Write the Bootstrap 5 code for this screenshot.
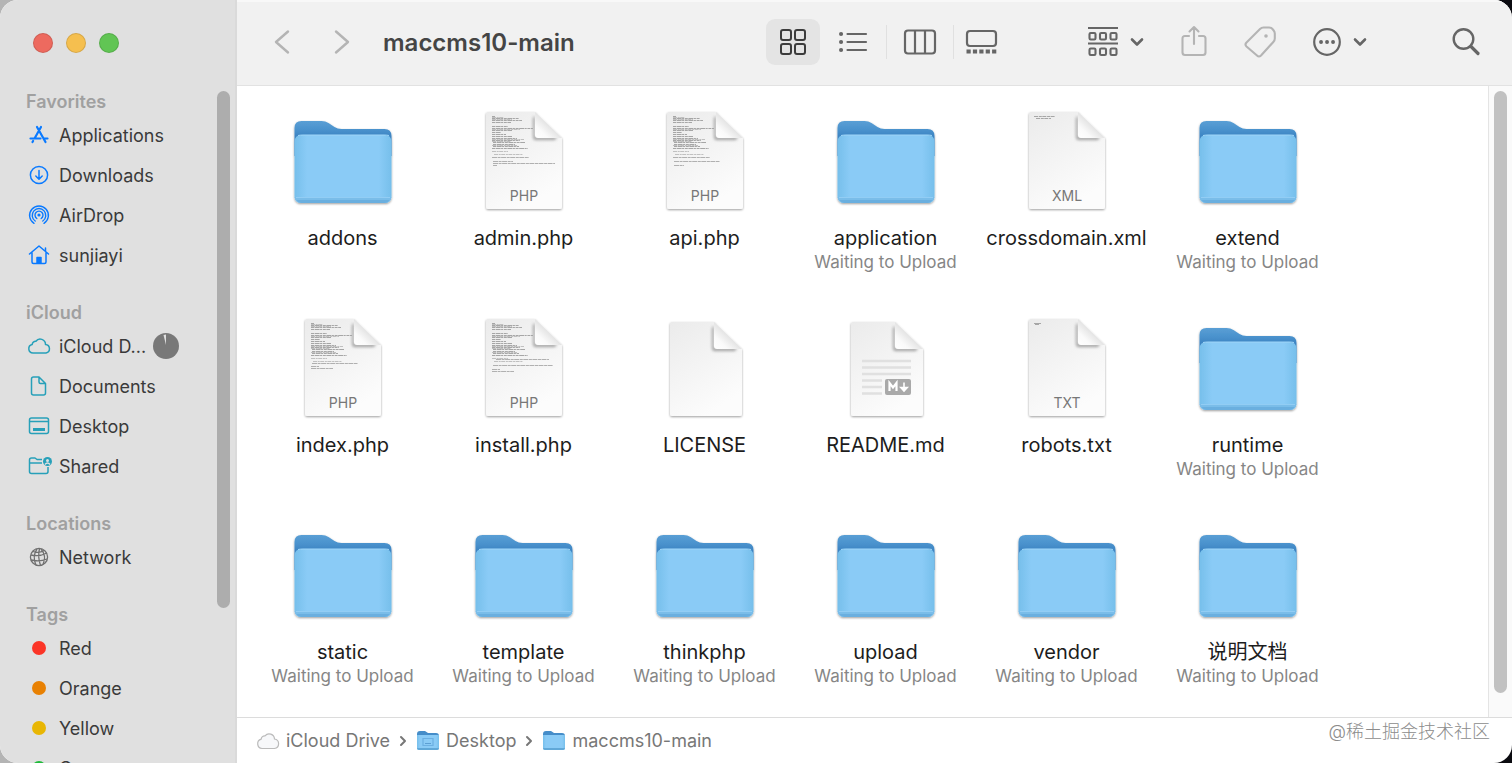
<!DOCTYPE html>
<html lang="en">
<head>
<meta charset="utf-8">
<meta name="viewport" content="width=device-width, initial-scale=1">
<title>maccms10-main</title>
<link rel="stylesheet" href="https://cdn.jsdelivr.net/npm/bootstrap@5.3.0/dist/css/bootstrap.min.css">
<style>
body { font-family: Inter, "Noto Sans CJK SC", sans-serif; background: linear-gradient(90deg, #b4b4b4 50%, #0b0b10 50%); }
.finder { border-radius: 18px; background: #fff; }
.side { width: 237px; background: #e0e0e0; border-right: 2px solid #dadada; }
.lights { height: 86px; padding-left: 33px; gap: 13px; }
.light { width: 20px; height: 20px; border-radius: 50%; border: 1px solid rgba(0,0,0,.12); padding: 0; }
.side-nav { padding: 3px 0 0 26px; }
.side-nav h2 { font-size: 18px; line-height: 26px; font-weight: 600; color: #a0a0a0; margin: 0; }
.side-nav section { margin-bottom: 25px; }
.side-nav a { height: 40px; font-size: 18px; color: #3a3a3a; gap: 7px; white-space: nowrap; }
.side-nav svg { width: 26px; height: 26px; flex: none; }
.dot { width: 14px; height: 14px; border-radius: 50%; margin: 0 6px; }
.track { width: 18px; padding-top: 5px; }
.thumb { width: 13px; border-radius: 7px; background: #adadad; height: 77%; }
.bar { height: 86px; background: #f1f1f1; border-bottom: 1px solid #e2e2e2; border-top: 2px solid #f8f8f8; padding: 0 19px 3px 18px; }
.bar h1 { font-size: 24px; font-weight: 600; color: #454545; margin: 2px auto 0 14px; }
.tool { width: 54px; height: 46px; padding: 0; border: 0; border-radius: 9px; color: #666; display: flex; align-items: center; justify-content: center; }
.tool.active { background: #e4e4e4; color: #3c3c3c; }
.tool.faint { color: #b4b4b4; }
.tool.wide { width: 72px; gap: 11px; }
.views { gap: 6px; margin-right: 71px; }
.rule { width: 1px; height: 34px; background: #e0e0e0; }
.flush { margin-left: -6px; }
.history { gap: 6px; }
.actions { gap: 16px; }
.pair { gap: 12px; }
.search { margin-left: 64px; }
.files { display: grid; grid-template-columns: repeat(auto-fill, 181px); grid-auto-rows: 207px; padding: 20px 0 0 15px; }
.files a { color: #1d1d1d; font-size: 20px; line-height: 28px; }
.files svg { width: 110px; height: 110px; display: block; margin: 0 auto 8px; }
.files span { display: block; white-space: nowrap; }
.files .wait { font-size: 17px; line-height: 21px; color: #868686; }
.main-track { width: 24px; flex: none; padding: 5px 0 24px 5px; background: #fafafa; border-left: 1px solid #e4e4e4; }
.main-track .thumb { background: #c1c1c1; height: 100%; }
.trail { height: 46px; border-top: 1px solid #dcdcdc; padding: 0 22px 0 19px; font-size: 18px; }
.trail nav { gap: 9px; }
.trail a { color: #777; gap: 6px; }
.trail svg { flex: none; }
.credit { color: #8c8c8c; font-weight: 300; margin-bottom: 18px; }
</style>
</head>
<body class="vh-100 overflow-hidden">
<svg width="0" height="0" class="position-absolute" aria-hidden="true">
  <defs>
    <linearGradient id="gBack" x1="0" y1="0" x2="0" y2="1"><stop offset="0" stop-color="#5a9fd5"/><stop offset=".25" stop-color="#4a92cd"/><stop offset=".55" stop-color="#357cbd"/><stop offset="1" stop-color="#357cbd"/></linearGradient>
    <linearGradient id="gFront" x1="0" y1="0" x2="1" y2="0"><stop offset="0" stop-color="#76bfeb"/><stop offset=".13" stop-color="#8acbf6"/><stop offset=".87" stop-color="#8acbf6"/><stop offset="1" stop-color="#76bfeb"/></linearGradient>
    <linearGradient id="gPaper" x1="0" y1="0" x2=".5" y2="1"><stop offset="0" stop-color="#ebebeb"/><stop offset="1" stop-color="#fcfcfc"/></linearGradient>
    <linearGradient id="gFold" x1="0" y1="1" x2=".5" y2=".5"><stop offset="0" stop-color="#fff"/><stop offset=".5" stop-color="#fafafa"/><stop offset="1" stop-color="#e4e4e4"/></linearGradient>
    <filter id="soft" x="-30%" y="-30%" width="160%" height="160%"><feGaussianBlur stdDeviation="1.500"/></filter>
    <filter id="drop" x="-10%" y="-10%" width="120%" height="120%"><feDropShadow dx="0" dy="1" stdDeviation="1" flood-opacity=".38"/></filter>
  </defs>
  <symbol id="folder" viewBox="0 0 110 110">
    <g filter="url(#drop)">
      <path d="M6.500 22q0-7 7-7h20q4 0 7 2l6 4q3 2 7 2h43q7 0 7 7v20h-97z" fill="url(#gBack)"/>
      <path d="M6.500 36q0-7 7-7h83q7 0 7 7v54q0 7-7 7h-83q-7 0-7-7z" fill="url(#gFront)"/>
      <path d="M6.500 91q1 6 7 6h83q6 0 7-6z" fill="#7abde9"/>
      <path d="M8.500 94q2 3 5 3h83q3 0 5-3z" fill="#6aafdf"/>
    </g>
    <path d="M10 29.500q2-.5 5-.5h81q3 0 5 .5" stroke="#a0d6f8" fill="none"/>
    <path d="M8 91.500h94" stroke="#92cdf4" stroke-width="1"/>
  </symbol>
  <symbol id="paper" viewBox="0 0 110 110">
    <path filter="url(#drop)" d="M17 8q0-2 2-2h47l27 26v69q0 2-2 2H19q-2 0-2-2z" fill="url(#gPaper)"/>
    <path d="M66 10v21h22l-2 3H67q-3 0-3-3V12z" fill="#555" opacity=".55" filter="url(#soft)"/>
    <path d="M66 6L93 32H69q-3 0-3-3z" fill="url(#gFold)"/>
  </symbol>
  <symbol id="blank" viewBox="0 0 110 110">
    <path filter="url(#drop)" d="M20 11q0-2 2-2h42l28 27v65q0 2-2 2H22q-2 0-2-2z" fill="url(#gPaper)"/>
    <path d="M64 13v22h23l-2 3H65q-3 0-3-3V15z" fill="#555" opacity=".55" filter="url(#soft)"/>
    <path d="M64 9L92 36H67q-3 0-3-3z" fill="url(#gFold)"/>
  </symbol>
  <symbol id="code" viewBox="0 0 110 110">
    <g stroke="#a6a6a6" stroke-width="1" fill="none">
      <path stroke-dasharray="3 .6 5 .5 2 .7" d="M23 10.500h3M23 12.500h27M23 14.500h30M23 16.500h19M23 20.500h16M23 22.500h41M23 24.500h20M23 26.500h9M23 28.500h14M23 30.500h20M23 32.500h25M23 34.500h28M24 36.500h32M24 38.500h22M24 40.500h26M23 42.500h36"/>
      <path stroke="#c0c0c0" stroke-dasharray="4 .7 2 .5" d="M23 11.500h12M23 13.500h20M23 23.500h28M23 33.500h32M23 35.500h19M23 39.500h25M23 45.500h16M25 48.500h29"/>
    </g>
  </symbol>
  <symbol id="mini" viewBox="0 0 24 22">
    <path d="M1 4q0-3 3-3h5l3 2h8q3 0 3 3v6H1z" fill="#458dc9"/><path d="M1 5h22v13q0 2-2 2H3q-2 0-2-2z" fill="url(#gFront)"/><path d="M1 18q0 2 2 2h18q2 0 2-2z" fill="#60a8d8"/>
  </symbol>
  <symbol id="down" viewBox="0 0 14 10"><path d="M2 2.500l5 5 5-5" fill="none" stroke="currentColor" stroke-width="2.600" stroke-linecap="round" stroke-linejoin="round"/></symbol>
  <symbol id="next" viewBox="0 0 8 12"><path d="M2 2l4 4-4 4" fill="none" stroke="#777" stroke-width="2" stroke-linecap="round" stroke-linejoin="round"/></symbol>
</svg>

<div class="finder d-flex h-100 overflow-hidden">
  <aside class="side d-flex flex-column flex-shrink-0 overflow-hidden">
    <div class="lights d-flex align-items-center flex-shrink-0">
      <button class="light" style="background:#ed6a5f" aria-label="Close"></button>
      <button class="light" style="background:#f5bf4f" aria-label="Minimize"></button>
      <button class="light" style="background:#61c554" aria-label="Zoom"></button>
    </div>
    <div class="d-flex flex-grow-1 overflow-hidden">
      <nav class="side-nav flex-grow-1" aria-label="Sidebar">
        <section>
          <h2>Favorites</h2>
          <a href="#" class="d-flex align-items-center text-decoration-none"><svg viewBox="0 0 26 26" fill="none" stroke="#0a7aff" stroke-width="2.200" stroke-linecap="round"><path d="M11 5l8.500 15M15 5L8.800 16M4.500 16.500h10M18.500 16.500h3M6.500 20l.6-1"/></svg><span>Applications</span></a>
          <a href="#" class="d-flex align-items-center text-decoration-none"><svg viewBox="0 0 26 26" fill="none" stroke="#0a7aff" stroke-width="1.500" stroke-linecap="round" stroke-linejoin="round"><circle cx="13" cy="13" r="8.600"/><path d="M13 8.500v8.500M9.800 14l3.200 3.200 3.200-3.200"/></svg><span>Downloads</span></a>
          <a href="#" class="d-flex align-items-center text-decoration-none"><svg viewBox="0 0 26 26" fill="none" stroke="#0a7aff" stroke-width="1.400" stroke-linecap="round"><circle cx="13" cy="13" r="1.600" fill="#0a7aff" stroke="none"/><path d="M10.800 16.500a4 4 0 1 1 4.400 0M9.200 19a6.800 6.800 0 1 1 7.600 0M8 21.300a9.400 9.400 0 1 1 10 0"/></svg><span>AirDrop</span></a>
          <a href="#" class="d-flex align-items-center text-decoration-none"><svg viewBox="0 0 26 26" fill="none" stroke="#0a7aff" stroke-width="1.500" stroke-linecap="round" stroke-linejoin="round"><path d="M3.500 12L13 4l9.500 8M6 10.500V20q0 1.500 1.500 1.500h11q1.500 0 1.500-1.500v-9.500M19.500 9V6"/><path d="M11 21v-5.500h4V21z" fill="#0a7aff"/></svg><span>sunjiayi</span></a>
        </section>
        <section>
          <h2>iCloud</h2>
          <a href="#" class="d-flex align-items-center text-decoration-none"><svg viewBox="0 0 26 26" fill="none" stroke="#27a0b9" stroke-width="1.500" stroke-linejoin="round"><path d="M7 20a4.300 4.300 0 0 1-.8-8.500 3.400 3.400 0 0 1 3.700-3.200A5.300 5.300 0 0 1 19.500 11.500 4.300 4.300 0 0 1 20 20z"/></svg><span>iCloud D...</span><svg viewBox="0 0 26 26"><circle cx="13" cy="13" r="13" fill="#787878"/><path d="M13 12L10.500 2l2.500-.4z" fill="#e0e0e0"/></svg></a>
          <a href="#" class="d-flex align-items-center text-decoration-none"><svg viewBox="0 0 26 26" fill="none" stroke="#27a0b9" stroke-width="1.500" stroke-linejoin="round"><path d="M7.500 4H13l6.500 6.500V20q0 2-2 2h-10q-2 0-2-2V6q0-2 2-2zM13 4v5q0 1.500 1.500 1.500h5"/></svg><span>Documents</span></a>
          <a href="#" class="d-flex align-items-center text-decoration-none"><svg viewBox="0 0 26 26" fill="none" stroke="#27a0b9" stroke-width="1.500"><rect x="3.500" y="5" width="19" height="15.500" rx="2"/><path d="M3.500 8.500h19"/><path d="M7 16.500h12" stroke-width="3"/></svg><span>Desktop</span></a>
          <a href="#" class="d-flex align-items-center text-decoration-none"><svg viewBox="0 0 26 26" fill="none" stroke="#27a0b9" stroke-width="1.500" stroke-linejoin="round"><path d="M16 6.500h-5L9 5H5.500q-2 0-2 2v11.500q0 2 2 2h14.500q2 0 2-2V14M3.500 10H16"/><circle cx="21.500" cy="8.500" r="4.500" fill="#27a0b9" stroke="none"/><circle cx="21.500" cy="7.500" r="1.500" fill="#e0e0e0" stroke="none"/><path d="M19 11.500q2.500-3 5 0" stroke="#e0e0e0"/></svg><span>Shared</span></a>
        </section>
        <section>
          <h2>Locations</h2>
          <a href="#" class="d-flex align-items-center text-decoration-none"><svg viewBox="0 0 26 26" fill="none" stroke="#707070" stroke-width="1.300"><circle cx="13" cy="13" r="8.600"/><path d="M13.500 4.500q-2 8 1 17M11 5q-5 7-1 16M15 5q6 7 2 15.500M5 11q8 2 16-2M5 16q9 2 16-1M7 7.500q6 2 11-1"/></svg><span>Network</span></a>
        </section>
        <section>
          <h2>Tags</h2>
          <a href="#" class="d-flex align-items-center text-decoration-none"><i class="dot" style="background:#fb3527"></i><span>Red</span></a>
          <a href="#" class="d-flex align-items-center text-decoration-none"><i class="dot" style="background:#e88103"></i><span>Orange</span></a>
          <a href="#" class="d-flex align-items-center text-decoration-none"><i class="dot" style="background:#e8b604"></i><span>Yellow</span></a>
          <a href="#" class="d-flex align-items-center text-decoration-none"><i class="dot" style="background:#1fba3a"></i><span>Green</span></a>
        </section>
      </nav>
      <div class="track flex-shrink-0"><div class="thumb"></div></div>
    </div>
  </aside>

  <div class="d-flex flex-column flex-grow-1 overflow-hidden">
    <header class="bar d-flex align-items-center flex-shrink-0">
      <div class="history d-flex">
        <button class="btn tool faint" aria-label="Back"><svg width="16" height="26" viewBox="0 0 16 26" fill="none" stroke="currentColor" stroke-width="2.400" stroke-linecap="round" stroke-linejoin="round"><path d="M14 2.500L2 13l12 10.500"/></svg></button>
        <button class="btn tool faint" aria-label="Forward"><svg width="16" height="26" viewBox="0 0 16 26" fill="none" stroke="currentColor" stroke-width="2.400" stroke-linecap="round" stroke-linejoin="round"><path d="M2 2.500L14 13 2 23.500"/></svg></button>
      </div>
      <h1 class="text-nowrap">maccms10-main</h1>
      <div class="views d-flex align-items-center" role="group" aria-label="View">
        <button class="btn tool active" aria-label="Icons"><svg width="28" height="28" viewBox="0 0 28 28" fill="none" stroke="currentColor" stroke-width="2"><rect x="2" y="2" width="10" height="10" rx="2"/><rect x="16" y="2" width="10" height="10" rx="2"/><rect x="2" y="16" width="10" height="10" rx="2"/><rect x="16" y="16" width="10" height="10" rx="2"/></svg></button>
        <button class="btn tool" aria-label="List"><svg width="30" height="24" viewBox="0 0 30 24" fill="none" stroke="currentColor" stroke-width="2.200" stroke-linecap="round"><path d="M9.500 4h18.500M9.500 12h18.500M9.500 20h18.500"/><path d="M3 4h.1M3 12h.1M3 20h.1" stroke-width="4"/></svg></button>
        <span class="rule"></span>
        <button class="btn tool" aria-label="Columns"><svg width="34" height="28" viewBox="0 0 34 28" fill="none" stroke="currentColor" stroke-width="2.200"><rect x="2" y="2.500" width="30" height="23" rx="3"/><path d="M12 2.500v23M22 2.500v23"/></svg></button>
        <span class="rule"></span>
        <button class="btn tool flush" aria-label="Gallery"><svg width="34" height="28" viewBox="0 0 34 28" fill="none" stroke="currentColor" stroke-width="2.200"><rect x="3" y="3" width="29" height="15" rx="3"/><path d="M2.500 23.500h30" stroke-width="4.200" stroke-dasharray="4.200 2.200"/></svg></button>
      </div>
      <div class="actions d-flex">
        <button class="btn tool wide" aria-label="Group"><svg width="32" height="32" viewBox="0 0 32 32" fill="none" stroke="currentColor" stroke-width="2.100"><path d="M1 2h30M1 17.500h30"/><rect x="2.500" y="7" width="6" height="6.500" rx="1.200"/><rect x="13" y="7" width="6" height="6.500" rx="1.200"/><rect x="23.500" y="7" width="6" height="6.500" rx="1.200"/><rect x="2.500" y="22.500" width="6" height="6.500" rx="1.200"/><rect x="13" y="22.500" width="6" height="6.500" rx="1.200"/><rect x="23.500" y="22.500" width="6" height="6.500" rx="1.200"/></svg><svg width="14" height="10"><use href="#down"/></svg></button>
        <div class="pair d-flex">
          <button class="btn tool faint" aria-label="Share"><svg width="28" height="34" viewBox="0 0 28 34" fill="none" stroke="currentColor" stroke-width="2.100" stroke-linecap="round" stroke-linejoin="round"><path d="M9 11H5q-2.500 0-2.500 2.500v14q0 2.500 2.500 2.500h18q2.500 0 2.500-2.500v-14Q25.500 11 23 11h-4M14 19V2M9.500 6.500L14 2l4.500 4.500"/></svg></button>
          <button class="btn tool faint" aria-label="Tags"><svg width="34" height="34" viewBox="0 0 34 34" fill="none" stroke="currentColor" stroke-width="2.100" stroke-linejoin="round"><path d="M17 4q1.500-1.500 3.500-1.500h5.500q2 0 3.200 1.200l1.300 1.500q1.300 1.500 1.300 3.300v5q0 2-1.500 3.500L18 30.500q-2 2-4 0l-10.500-9q-2-2 0-4z"/><circle cx="23" cy="11" r="1.800" fill="currentColor" stroke="none"/></svg></button>
        </div>
        <button class="btn tool wide" aria-label="More"><svg width="30" height="30" viewBox="0 0 30 30" fill="none" stroke="currentColor" stroke-width="2.200"><circle cx="15" cy="15" r="12.800"/><path d="M9 15h.1M15 15h.1M21 15h.1" stroke-width="3.800" stroke-linecap="round"/></svg><svg width="14" height="10"><use href="#down"/></svg></button>
      </div>
      <button class="btn tool search" aria-label="Search"><svg width="30" height="30" viewBox="0 0 30 30" fill="none" stroke="currentColor" stroke-width="2.400" stroke-linecap="round"><circle cx="12.500" cy="12" r="9.800"/><path d="M20 19.500l7 7" stroke-width="3.200"/></svg></button>
    </header>

    <main class="d-flex flex-grow-1 overflow-hidden">
      <div class="files flex-grow-1 text-center">
        <a href="#" class="text-decoration-none"><svg><use href="#folder"/></svg><span>addons</span></a>
        <a href="#" class="text-decoration-none"><svg viewBox="0 0 110 110"><use href="#paper"/><use href="#code"/><path d="M23 51.500h37M24 55.500h20M24 57.500h62M24 59.500h4" stroke="#b0b0b0" stroke-dasharray="5 .6 3 .5"/><text x="55" y="95" text-anchor="middle" font-size="14" fill="#777">PHP</text></svg><span>admin.php</span></a>
        <a href="#" class="text-decoration-none"><svg viewBox="0 0 110 110"><use href="#paper"/><use href="#code"/><path d="M23 51.500h37M24 55.500h46M24 59.500h10" stroke="#b0b0b0" stroke-dasharray="5 .6 3 .5"/><text x="55" y="95" text-anchor="middle" font-size="14" fill="#777">PHP</text></svg><span>api.php</span></a>
        <a href="#" class="text-decoration-none"><svg><use href="#folder"/></svg><span>application</span><span class="wait">Waiting to Upload</span></a>
        <a href="#" class="text-decoration-none"><svg viewBox="0 0 110 110"><use href="#paper"/><path d="M22 10.500h21M24 12.500h15" stroke="#a6a6a6" stroke-dasharray="4 .8 3 .5"/><text x="55" y="95" text-anchor="middle" font-size="14" fill="#777">XML</text></svg><span>crossdomain.xml</span></a>
        <a href="#" class="text-decoration-none"><svg><use href="#folder"/></svg><span>extend</span><span class="wait">Waiting to Upload</span></a>

        <a href="#" class="text-decoration-none"><svg viewBox="0 0 110 110"><use href="#paper"/><use href="#code"/><path d="M24 50.500h46M23 53.500h8M23 55.500h22" stroke="#b0b0b0" stroke-dasharray="5 .6 3 .5"/><text x="55" y="95" text-anchor="middle" font-size="14" fill="#777">PHP</text></svg><span>index.php</span></a>
        <a href="#" class="text-decoration-none"><svg viewBox="0 0 110 110"><use href="#paper"/><use href="#code"/><path d="M27 46.500h53M24 52.500h60M23 56.500h8M23 58.500h22" stroke="#b0b0b0" stroke-dasharray="5 .6 3 .5"/><text x="55" y="95" text-anchor="middle" font-size="14" fill="#777">PHP</text></svg><span>install.php</span></a>
        <a href="#" class="text-decoration-none"><svg><use href="#blank"/></svg><span>LICENSE</span></a>
        <a href="#" class="text-decoration-none"><svg viewBox="0 0 110 110"><use href="#blank"/><path d="M31 48h49M31 54.500h49M31 61h49M31 67.500h20M31 74h20M31 80.500h20" stroke="#e0e0e0" stroke-width="2.400"/><rect x="54" y="66" width="26" height="16" rx="2" fill="#a9a9a9"/><path d="M58.500 78v-8l3.500 4.500 3.500-4.500v8" fill="none" stroke="#fff" stroke-width="2.200"/><path d="M73 69.500v7M69.800 74.500l3.200 3.500 3.200-3.500z" fill="#fff" stroke="#fff" stroke-width="1.600"/></svg><span>README.md</span></a>
        <a href="#" class="text-decoration-none"><svg viewBox="0 0 110 110"><use href="#paper"/><path d="M22 10.500h7M23 11.500h4" stroke="#a6a6a6"/><text x="55" y="95" text-anchor="middle" font-size="14" fill="#777">TXT</text></svg><span>robots.txt</span></a>
        <a href="#" class="text-decoration-none"><svg><use href="#folder"/></svg><span>runtime</span><span class="wait">Waiting to Upload</span></a>

        <a href="#" class="text-decoration-none"><svg><use href="#folder"/></svg><span>static</span><span class="wait">Waiting to Upload</span></a>
        <a href="#" class="text-decoration-none"><svg><use href="#folder"/></svg><span>template</span><span class="wait">Waiting to Upload</span></a>
        <a href="#" class="text-decoration-none"><svg><use href="#folder"/></svg><span>thinkphp</span><span class="wait">Waiting to Upload</span></a>
        <a href="#" class="text-decoration-none"><svg><use href="#folder"/></svg><span>upload</span><span class="wait">Waiting to Upload</span></a>
        <a href="#" class="text-decoration-none"><svg><use href="#folder"/></svg><span>vendor</span><span class="wait">Waiting to Upload</span></a>
        <a href="#" class="text-decoration-none"><svg><use href="#folder"/></svg><span lang="zh">说明文档</span><span class="wait">Waiting to Upload</span></a>
      </div>
      <div class="main-track"><div class="thumb"></div></div>
    </main>

    <footer class="trail d-flex align-items-center flex-shrink-0 text-nowrap">
      <nav class="d-flex align-items-center" aria-label="Path">
        <a href="#" class="d-flex align-items-center text-decoration-none"><svg width="24" height="22" viewBox="0 0 24 22"><path d="M6 18.500a4.800 4.800 0 0 1-.8-9.400 3.500 3.500 0 0 1 3.800-3.300A5.400 5.400 0 0 1 18.500 9 4.800 4.800 0 0 1 18.500 18.500z" fill="#f7f8fa" stroke="#bbb" stroke-width="1.200"/></svg><span>iCloud Drive</span></a>
        <svg width="8" height="12"><use href="#next"/></svg>
        <a href="#" class="d-flex align-items-center text-decoration-none"><svg width="24" height="22" viewBox="0 0 24 22"><use href="#mini"/><path d="M7 8.500h10v7H7z" fill="none" stroke="#6cb0e2" stroke-width="1.200"/><path d="M9 13.500h6" stroke="#5c9fd3"/></svg><span>Desktop</span></a>
        <svg width="8" height="12"><use href="#next"/></svg>
        <a href="#" class="d-flex align-items-center text-decoration-none"><svg width="24" height="22"><use href="#mini"/></svg><span>maccms10-main</span></a>
      </nav>
      <span class="credit ms-auto" lang="zh">@稀土掘金技术社区</span>
    </footer>
  </div>
</div>
<script src="https://cdn.jsdelivr.net/npm/bootstrap@5.3.0/dist/js/bootstrap.bundle.min.js"></script>
</body>
</html>
